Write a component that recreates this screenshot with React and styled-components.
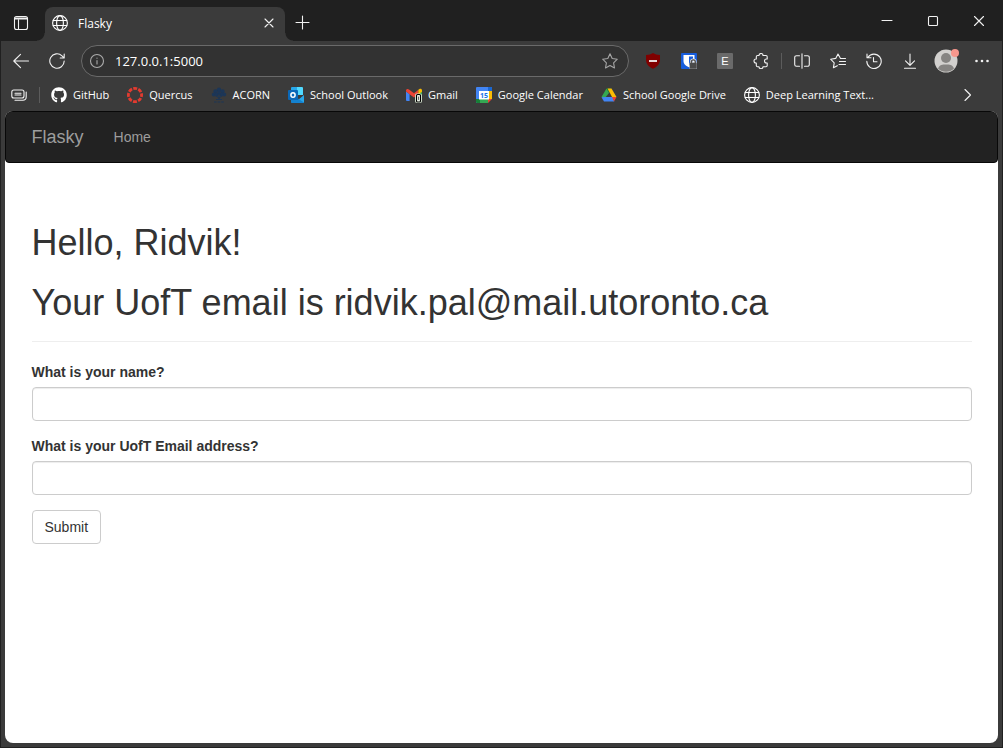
import React from "react";
import styled, { createGlobalStyle } from "styled-components";
import { FaGithub } from "react-icons/fa";

const GlobalStyle = createGlobalStyle`
  *, *::before, *::after { box-sizing: border-box; }
  body {
    margin: 0;
    background: #3b3b3b;
    font-family: "Liberation Sans", Arial, sans-serif;
  }
`;

const Window = styled.div`
  display: flex;
  flex-direction: column;
  min-height: 100vh;
  background: #3b3b3b;
  border: solid #202020;
  border-width: 0 1px 1px;
  color: #fff;
  font-family: "Open Sans", sans-serif;
`;

const TabStrip = styled.div`
  display: flex;
  align-items: flex-end;
  height: 41px;
  padding-left: 2px;
  background: #202020;
`;

const IconButton = styled.button`
  display: flex;
  flex: none;
  align-items: center;
  justify-content: center;
  width: ${(p) => p.$width || 36}px;
  height: ${(p) => p.$height || 32}px;
  padding: 0;
  border: 0;
  background: none;
  color: ${(p) => p.$color || "#f2f2f2"};
`;

const Tab = styled.div`
  position: relative;
  display: flex;
  align-items: center;
  width: 240px;
  height: 34px;
  margin-left: 6px;
  padding: 0 0 2px 7px;
  gap: 10px;
  border-radius: 8px 8px 0 0;
  background: #3b3b3b;
  font-size: 12px;

  &::before,
  &::after {
    content: "";
    position: absolute;
    bottom: 0;
    width: 8px;
    height: 8px;
  }
  &::before {
    right: 100%;
    background: radial-gradient(circle at 0 0, #202020 7px, #3b3b3b 8px);
  }
  &::after {
    left: 100%;
    background: radial-gradient(circle at 100% 0, #202020 7px, #3b3b3b 8px);
  }
`;

const TabTitle = styled.span`
  flex: 1;
`;

const WindowControls = styled.div`
  display: flex;
  align-self: flex-start;
  margin-left: auto;
`;

const Toolbar = styled.div`
  display: flex;
  align-items: center;
  height: 39px;
  padding: 0 2px;
`;

const AddressBar = styled.label`
  display: flex;
  flex: 1;
  align-items: center;
  height: 32px;
  margin: 0 6px;
  padding-left: 7px;
  border: 1px solid #6a6a6a;
  border-radius: 16px;
  background: #323232;
`;

const AddressInput = styled.input`
  flex: 1;
  min-width: 0;
  padding: 0;
  margin-left: 10px;
  border: 0;
  outline: 0;
  background: none;
  color: #fff;
  font: 13px "Open Sans", sans-serif;
`;

const Divider = styled.span`
  flex: none;
  width: 1px;
  height: 16px;
  margin: 0 2px;
  background: #5c5c5c;
`;

const BookmarkBar = styled.nav`
  display: flex;
  align-items: center;
  height: 31px;
  padding: 0 20px 2px 0;
`;

const BookmarkList = styled.div`
  display: flex;
  flex: 1;
  gap: 18px;
  padding-left: 9px;
`;

const Bookmark = styled.a`
  display: flex;
  align-items: center;
  gap: 6px;
  color: #fff;
  font-size: 11px;
  line-height: 16px;
  white-space: nowrap;
  text-decoration: none;
`;

const Page = styled.div`
  flex: 1;
  margin: 0 4px 4px;
  overflow: hidden;
  border-radius: 8px;
  background: #fff;
  color: #333;
  font: 14px/20px "Liberation Sans", Arial, sans-serif;
`;

const Navbar = styled.nav`
  height: 52px;
  border: 1px solid #080808;
  border-radius: 6px 6px 4px 4px;
  background: #222;
`;

const Container = styled.div`
  max-width: 970px;
  margin: 0 auto;
  padding: 0 15px;
`;

const NavItems = styled(Container)`
  display: flex;
  align-items: center;
  height: 50px;
  gap: 30px;
`;

const NavLink = styled.a`
  color: #9d9d9d;
  font-size: ${(p) => (p.$brand ? 18 : 14)}px;
  text-decoration: none;
`;

const PageHeader = styled.header`
  display: flex;
  flex-direction: column;
  gap: 20px;
  margin: 60px 0 20px;
  padding-bottom: 18px;
  border-bottom: 1px solid #eee;
`;

const Heading = styled.h1`
  margin: 0;
  font-size: 36px;
  font-weight: 500;
  line-height: 40px;
`;

const FormGroup = styled.div`
  margin-bottom: 15px;
`;

const Label = styled.label`
  display: block;
  margin-bottom: 5px;
  font-weight: 700;
`;

const TextInput = styled.input`
  display: block;
  width: 100%;
  height: 34px;
  padding: 6px 12px;
  border: 1px solid #ccc;
  border-radius: 4px;
  background: #fff;
  box-shadow: inset 0 1px 1px rgba(0, 0, 0, 0.075);
  color: #555;
  font: inherit;
`;

const SubmitButton = styled.button`
  height: 34px;
  padding: 6px 12px;
  border: 1px solid #ccc;
  border-radius: 4px;
  background: #fff;
  color: #333;
  font: inherit;
`;

const IconSvg = styled.svg`
  flex: none;
`;

const Svg = ({ size = 16, children, w = 1.1, ...rest }) => (
  <IconSvg
    width={size}
    height={size}
    viewBox={`0 0 ${size} ${size}`}
    fill="none"
    stroke="currentColor"
    strokeWidth={w}
    strokeLinecap="round"
    strokeLinejoin="round"
    aria-hidden="true"
    {...rest}
  >
    {children}
  </IconSvg>
);

const Globe = () => (
  <Svg>
    <circle cx="8" cy="8" r="7.4" />
    <ellipse cx="8" cy="8" rx="3.4" ry="7.4" />
    <path d="M1.2 5.5h13.6M1.2 10.5h13.6" />
  </Svg>
);

const QuercusIcon = () => (
  <Svg w={2.8} stroke="#e33b30" strokeLinecap="butt">
    <circle cx="8" cy="8" r="6.6" strokeDasharray="3.9 1.284" strokeDashoffset="1.95" />
  </Svg>
);

const AcornIcon = () => (
  <Svg stroke="#1c3657" w={1}>
    <g fill="#1c3657" stroke="none">
      <circle cx="8" cy="2.8" r="2.2" />
      <circle cx="4.4" cy="4.2" r="2" />
      <circle cx="11.6" cy="4.2" r="2" />
      <circle cx="2.8" cy="7.4" r="2" />
      <circle cx="13.2" cy="7.4" r="2" />
      <circle cx="5.6" cy="7.6" r="1.8" />
      <circle cx="10.4" cy="7.6" r="1.8" />
      <circle cx="8" cy="6" r="1.8" />
    </g>
    <path d="M8 7v5.5M5.500 12.500h5M8 11l3-2M8 11 5 9" />
    <path d="M3 15h10" w={1.6} strokeDasharray="2.6 1" strokeLinecap="butt" />
  </Svg>
);

const OutlookIcon = () => (
  <Svg stroke="none">
    <path fill="#28a8ea" d="M3 1a1 1 0 0 1 1-1h5v7H3z" />
    <path fill="#50d9ff" d="M9 0h5a1 1 0 0 1 1 1v7H9z" />
    <path fill="#0f68b4" d="M3 7h7v6H3z" />
    <path fill="#28a8ea" d="M16 8v7a1 1 0 0 1-1 1H4l-1-1v-2h7z" />
    <path fill="#1482d0" d="m10 11.500 6 4-1 .5H4l-1-1v-2h7z" />
    <rect y="3" width="10" height="10" rx="1" fill="#0a68b8" />
    <ellipse cx="5" cy="8" rx="2.100" ry="2.300" stroke="#fff" strokeWidth="1.500" />
  </Svg>
);

const GmailIcon = () => (
  <Svg stroke="none">
    <path fill="#4285f4" d="M0 4.500 3.600 7v7H1a1 1 0 0 1-1-1z" />
    <path fill="#34a853" d="M12.400 7 16 4.500V13a1 1 0 0 1-1 1h-2.600z" />
    <path fill="#ea4335" d="M0 3.500C0 1.800 1.800 1.500 3 2.400L8 6.200l4.400-3.400V7.200L8 10.500 3.600 7.200 0 4.600z" />
    <path fill="#fbbc04" d="M12.400 2.800 13.200 2.200C14.500 1.300 16 2 16 3.500v1.200l-3.600 2.700z" />
    <rect x="9" y="6.500" width="7" height="9.500" rx="2" fill="#d5e3cf" />
    <rect x="10.500" y="7.500" width="4" height="7.500" rx="1" fill="#e8efe4" stroke="#000" />
    <path d="M12.500 10v2.500" stroke="#666" strokeWidth="1" />
  </Svg>
);

const CalendarIcon = () => (
  <Svg stroke="none">
    <path fill="#4285f4" d="M1 0h14a1 1 0 0 1 1 1v3H4v12H1a1 1 0 0 1-1-1V1a1 1 0 0 1 1-1" />
    <path fill="#1967d2" d="M12 0h3a1 1 0 0 1 1 1v3h-4z" />
    <path fill="#fbbc04" d="M12 4h4v8h-4z" />
    <path fill="#34a853" d="M4 12h8v4H4z" />
    <path fill="#188038" d="M0 12h4v4H1a1 1 0 0 1-1-1z" />
    <path fill="#ea4335" d="M12 12h4l-4 4z" />
    <path fill="#fff" d="M3 4h10v8.500H3z" />
    <text x="8" y="11" textAnchor="middle" fill="#1a73e8" fontSize="7" fontWeight="700">
      15
    </text>
  </Svg>
);

const DriveIcon = () => (
  <Svg stroke="none">
    <path fill="#188038" d="M5.500 1.500h5L8 6z" />
    <path fill="#fbbc04" d="M6.500 1.500h4L15.500 10H11z" />
    <path fill="#34a853" d="M5.500 1.500 8 6l-4.500 5.500L.5 10z" />
    <path fill="#4285f4" d="M4.300 10h7.500l1.500 4.500H3L.5 10.200z" />
    <path fill="#ea4335" d="M11 10h4.500L13 14.500z" />
  </Svg>
);

const bookmarks = [
  ["GitHub", <FaGithub size={16} />],
  ["Quercus", <QuercusIcon />],
  ["ACORN", <AcornIcon />],
  ["School Outlook", <OutlookIcon />],
  ["Gmail", <GmailIcon />],
  ["Google Calendar", <CalendarIcon />],
  ["School Google Drive", <DriveIcon />],
  ["Deep Learning Text...", <Globe />],
];

const BrowserTabs = () => (
  <TabStrip>
    <IconButton aria-label="Tab actions" $height={36}>
      <Svg>
        <rect x="1.500" y="1.500" width="13" height="13" rx="2" />
        <path d="M2 3h12M2 4h12M5.500 5v9" />
      </Svg>
    </IconButton>
    <Tab>
      <Globe />
      <TabTitle>Flasky</TabTitle>
      <IconButton aria-label="Close tab" $width={32}>
        <Svg>
          <path d="m4 4 8 8M12 4l-8 8" />
        </Svg>
      </IconButton>
    </Tab>
    <IconButton aria-label="New tab" $height={37}>
      <Svg>
        <path d="M7.500 1v13M1 7.500h13" />
      </Svg>
    </IconButton>
    <WindowControls>
      <IconButton aria-label="Minimize" $width={46} $height={41}>
        <Svg>
          <path d="M3 7.500h10" />
        </Svg>
      </IconButton>
      <IconButton aria-label="Maximize" $width={46} $height={41}>
        <Svg>
          <rect x="3.500" y="3.500" width="9" height="9" rx="1" />
        </Svg>
      </IconButton>
      <IconButton aria-label="Close" $width={46} $height={41}>
        <Svg>
          <path d="m3.500 3.500 9 9M12.500 3.500l-9 9" />
        </Svg>
      </IconButton>
    </WindowControls>
  </TabStrip>
);

const BrowserToolbar = () => (
  <Toolbar>
    <IconButton aria-label="Back">
      <Svg>
        <path d="M15.500 8H.8M7.500 1.300.8 8l6.700 6.700" />
      </Svg>
    </IconButton>
    <IconButton aria-label="Refresh">
      <Svg>
        <path d="M15.200 8A7.200 7.200 0 1 1 13 2.800L15 4.800M15.200 1v4h-4" />
      </Svg>
    </IconButton>
    <AddressBar>
      <Svg stroke="#ababab">
        <circle cx="8" cy="8" r="6.500" />
        <path d="M8 7.500v3.500M8 5v.3" />
      </Svg>
      <AddressInput type="text" aria-label="Address" defaultValue="127.0.0.1:5000" />
      <IconButton aria-label="Add to favorites" $color="#a5a5a5">
        <Svg>
          <path d="m8 .8 2.200 4.700 5.100.7-3.700 3.600.9 5.200L8 12.500 3.500 15l.9-5.200L.7 6.200l5.100-.7z" />
        </Svg>
      </IconButton>
    </AddressBar>
    <IconButton aria-label="Content blocker">
      <Svg stroke="none">
        <path fill="#800000" d="M8 0c2 1.300 4 1.800 7 2v4.500c0 4.500-2.500 7.200-7 9.300-4.500-2.100-7-4.800-7-9.300V2c3-.2 5-.7 7-2" />
        <path fill="#e8dada" d="M4 7h8v2H4z" />
      </Svg>
    </IconButton>
    <IconButton aria-label="Password manager">
      <Svg stroke="none">
        <rect width="16" height="16" rx="1" fill="#175ddc" />
        <path fill="#fff" d="M2.500 2h11v6c0 3.500-3 5-5.500 6.300C5.500 13 2.500 11.500 2.500 8z" />
        <path fill="#175ddc" d="M8 3.500h4V8c0 2-1.800 3.300-4 4.500z" />
        <path d="M10.300 10V8.800a2 2 0 0 1 4 0V10" stroke="#ddd" strokeWidth="2.600" />
        <rect x="8.500" y="9.500" width="7.500" height="6.500" rx="1" fill="#4a4a4a" stroke="#ccc" strokeWidth=".5" />
        <path d="M10.300 10V8.800a2 2 0 0 1 4 0V10" stroke="#4a4a4a" strokeWidth="1.200" />
      </Svg>
    </IconButton>
    <IconButton aria-label="Extension E">
      <Svg stroke="none">
        <rect width="16" height="16" rx="1" fill="#6a6a6a" />
        <text x="8" y="12" textAnchor="middle" fill="#fff" fontSize="11">
          E
        </text>
      </Svg>
    </IconButton>
    <IconButton aria-label="Extensions">
      <Svg>
        <path d="M4.500 2.500H6a2 2 0 0 1 4 0h3a1.200 1.200 0 0 1 1.200 1.200V6h-.7a2 2 0 0 0 0 4h.7v2.500a1.200 1.200 0 0 1-1.200 1.200h-3a2 2 0 0 1-4 0H4.500a1.200 1.200 0 0 1-1.200-1.200V10H3a2 2 0 0 1 0-4h.3V3.700a1.200 1.200 0 0 1 1.200-1.200z" />
      </Svg>
    </IconButton>
    <Divider />
    <IconButton aria-label="Split screen">
      <Svg>
        <path d="M8 .8v14.400M5.500 2.700h-3a1.800 1.800 0 0 0-1.800 1.800v7a1.800 1.800 0 0 0 1.800 1.800h3M10.500 2.700h3a1.800 1.800 0 0 1 1.800 1.800v7a1.800 1.800 0 0 1-1.800 1.800h-3" />
      </Svg>
    </IconButton>
    <IconButton aria-label="Favorites">
      <Svg>
        <path d="M15.500 5.500h-5L8 1 5.700 5.400.6 6.200l3.600 3.600-.8 5 3.900-2.100M9.500 8.500h6M9 11.500h6.500" />
      </Svg>
    </IconButton>
    <IconButton aria-label="History">
      <Svg>
        <path d="M2 4.300A7.200 7.200 0 1 1 .8 8.200M1 1v3.800h4M7.500 4.500v4.300H11" />
      </Svg>
    </IconButton>
    <IconButton aria-label="Downloads">
      <Svg>
        <path d="M8 1v11M3.500 7.800 8 12.300l4.500-4.500M2.500 15.300h11" />
      </Svg>
    </IconButton>
    <IconButton aria-label="Profile">
      <Svg size={26} stroke="none">
        <circle cx="13" cy="13" r="11.500" fill="#d2d0ce" />
        <circle cx="13" cy="10" r="5" fill="#868482" />
        <path fill="#868482" d="M5 20.500C6.500 16.800 9.500 16.500 13 16.500s6.500.3 8 4a11.500 11.500 0 0 1-16 0" />
        <circle cx="22" cy="5" r="4" fill="#f7978d" />
      </Svg>
    </IconButton>
    <IconButton aria-label="More">
      <Svg stroke="none">
        <circle cx="2.500" cy="8" r="1.300" fill="#f2f2f2" />
        <circle cx="8" cy="8" r="1.300" fill="#f2f2f2" />
        <circle cx="13.500" cy="8" r="1.300" fill="#f2f2f2" />
      </Svg>
    </IconButton>
  </Toolbar>
);

const Bookmarks = () => (
  <BookmarkBar aria-label="Bookmarks">
    <IconButton aria-label="Workspaces" $height={28}>
      <Svg>
        <rect x=".8" y="3" width="12.200" height="8" rx="2" />
        <path d="M4 6.200h6M4 8h6M15.200 5v5a3.300 3.300 0 0 1-3.300 3.200H4" />
      </Svg>
    </IconButton>
    <Divider />
    <BookmarkList>
      {bookmarks.map(([name, icon]) => (
        <Bookmark href="#" key={name}>
          {icon}
          {name}
        </Bookmark>
      ))}
    </BookmarkList>
    <IconButton aria-label="More bookmarks" $width={28} $height={28}>
      <Svg>
        <path d="m5 2.500 5.500 5.500L5 13.500" />
      </Svg>
    </IconButton>
  </BookmarkBar>
);

export default function App() {
  return (
    <>
      <GlobalStyle />
      <Window>
        <BrowserTabs />
        <BrowserToolbar />
        <Bookmarks />
        <Page>
          <Navbar>
            <NavItems>
              <NavLink href="#" $brand>
                Flasky
              </NavLink>
              <NavLink href="#">Home</NavLink>
            </NavItems>
          </Navbar>
          <Container as="main">
            <PageHeader>
              <Heading>Hello, Ridvik!</Heading>
              <Heading>Your UofT email is ridvik.pal@mail.utoronto.ca</Heading>
            </PageHeader>
            <form onSubmit={(e) => e.preventDefault()}>
              <FormGroup>
                <Label htmlFor="name">What is your name?</Label>
                <TextInput id="name" type="text" />
              </FormGroup>
              <FormGroup>
                <Label htmlFor="email">What is your UofT Email address?</Label>
                <TextInput id="email" type="text" />
              </FormGroup>
              <SubmitButton type="submit">Submit</SubmitButton>
            </form>
          </Container>
        </Page>
      </Window>
    </>
  );
}
